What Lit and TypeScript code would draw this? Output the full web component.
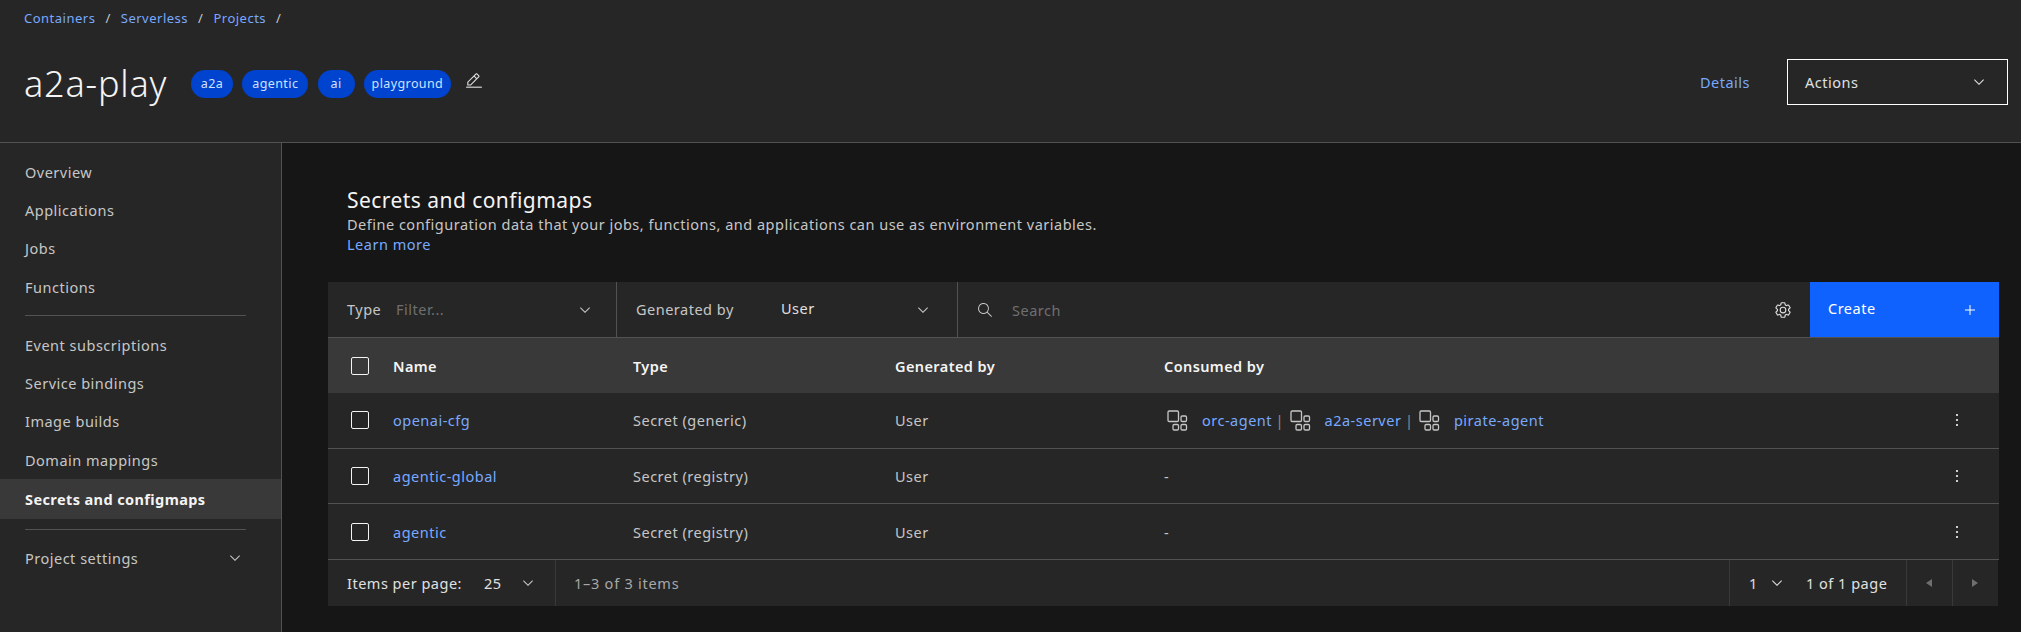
import { LitElement, html, css } from "lit";
import { customElement } from "lit/decorators.js";

const chevron = html`<svg class="chev" width="16" height="16" viewBox="0 0 16 16" fill="currentColor"><path d="M8 11L3 6l.7-.7L8 9.6l4.3-4.3.7.7z"/></svg>`;
const gear = html`<svg width="18" height="18" viewBox="0 0 32 32" fill="currentColor"><path d="M27,16.76c0-.25,0-.5,0-.76s0-.51,0-.77l1.92-1.68A2,2,0,0,0,29.3,11L26.94,7a2,2,0,0,0-1.73-1,2,2,0,0,0-.64.1l-2.43.82a11.35,11.35,0,0,0-1.31-.75l-.51-2.52a2,2,0,0,0-2-1.61H13.64a2,2,0,0,0-2,1.61l-.51,2.52a11.48,11.48,0,0,0-1.32.75L7.43,6.06A2,2,0,0,0,6.79,6,2,2,0,0,0,5.06,7L2.7,11a2,2,0,0,0,.41,2.51L5,15.24c0,.25,0,.5,0,.76s0,.51,0,.77L3.11,18.45A2,2,0,0,0,2.7,21L5.06,25a2,2,0,0,0,1.73,1,2,2,0,0,0,.64-.1l2.43-.82a11.35,11.35,0,0,0,1.31.75l.51,2.52a2,2,0,0,0,2,1.61h4.72a2,2,0,0,0,2-1.61l.51-2.52a11.48,11.48,0,0,0,1.32-.75l2.42.82a2,2,0,0,0,.64.1,2,2,0,0,0,1.73-1L29.3,21a2,2,0,0,0-.41-2.51ZM25.21,24l-3.43-1.16a8.86,8.86,0,0,1-2.71,1.57L18.36,28H13.64l-.71-3.55a9.36,9.36,0,0,1-2.7-1.57L6.79,24,4.43,20l2.72-2.4a8.9,8.9,0,0,1,0-3.13L4.43,12,6.79,8l3.43,1.16a8.86,8.86,0,0,1,2.71-1.57L13.64,4h4.72l.71,3.55a9.36,9.36,0,0,1,2.7,1.57L25.21,8,27.57,12l-2.72,2.4a8.9,8.9,0,0,1,0,3.13L27.57,20Z"/><path d="M16,22a6,6,0,1,1,6-6A5.94,5.94,0,0,1,16,22Zm0-10a3.91,3.91,0,0,0-4,4,3.91,3.91,0,0,0,4,4,3.91,3.91,0,0,0,4-4A3.91,3.91,0,0,0,16,12Z"/></svg>`;
const search = html`<svg width="16" height="16" viewBox="0 0 16 16" fill="currentColor"><path d="M15,14.3L10.7,10c1.9-2.3,1.6-5.8-0.7-7.7S4.2,0.7,2.3,3S0.7,8.8,3,10.7c2,1.7,5,1.7,7,0l4.3,4.3L15,14.3z M2,6.5C2,4,4,2,6.5,2S11,4,11,6.5S9,11,6.5,11S2,9,2,6.5z"/></svg>`;
const pencil = html`<svg width="18" height="18" viewBox="0 0 32 32" fill="currentColor"><path d="M2 26H30V28H2z"/><path d="M25.4,9c0.8-0.8,0.8-2,0-2.8l-3.6-3.6c-0.8-0.8-2-0.8-2.8,0l-15,15V24h6.4L25.4,9z M20.4,4L24,7.6l-3,3L17.4,7L20.4,4z M6,22v-3.6l10-10l3.6,3.6l-10,10H6z"/></svg>`;
const plus = html`<svg width="16" height="16" viewBox="0 0 16 16" fill="currentColor"><path d="M8.5 3h-1v4.500H3v1h4.500V13h1V8.500H13v-1H8.500z"/></svg>`;
const dots = html`<svg width="16" height="16" viewBox="0 0 16 16" fill="currentColor"><circle cx="8" cy="3" r="1.100"/><circle cx="8" cy="8" r="1.100"/><circle cx="8" cy="13" r="1.100"/></svg>`;
const appIcon = html`<svg class="app" width="21" height="21" viewBox="0 0 21 21" fill="none" stroke="currentColor" stroke-width="1.300"><rect x="1" y="1" width="10.500" height="10.500" rx="1.200"/><rect x="14" y="6" width="5.500" height="5.500" rx="1.200"/><rect x="6" y="14.500" width="5.500" height="5.500" rx="1.200"/><rect x="14" y="14.500" width="5.500" height="5.500" rx="1.200"/></svg>`;
const caret = (d: string) => html`<svg width="16" height="16" viewBox="0 0 16 16" fill="currentColor"><path d="${d}"/></svg>`;

const navTop = ["Overview", "Applications", "Jobs", "Functions"];
const navMid = ["Event subscriptions", "Service bindings", "Image builds", "Domain mappings"];
const rows = [
  { name: "openai-cfg", type: "Secret (generic)", consumed: ["orc-agent", "a2a-server", "pirate-agent"] },
  { name: "agentic-global", type: "Secret (registry)", consumed: [] as string[] },
  { name: "agentic", type: "Secret (registry)", consumed: [] as string[] },
];

@customElement("app-root")
export class AppRoot extends LitElement {
  static styles = css`
    :host {
      display: block;
      width: 2021px;
      height: 632px;
      overflow: hidden;
      background: #161616;
      color: #c6c6c6;
      font-family: "Noto Sans", "Liberation Sans", sans-serif;
      font-size: 14.5px;
      letter-spacing: 0.5px;
    }
    a { color: #78a9ff; text-decoration: none; }
    svg { display: block; flex: none; }

    .top { height: 142px; background: #262626; border-bottom: 1px solid #525252; display: flex; }
    .top-left { padding: 9px 0 0 24px; flex: 1; }
    .crumbs { display: flex; font-size: 13px; line-height: 18px; gap: 10px; color: #c6c6c6; }
    .title-row { display: flex; align-items: center; margin-top: 34px; height: 46px; }
    h1 { margin: 0; font-size: 36px; font-weight: 300; line-height: 46px; color: #f4f4f4; width: 167px; letter-spacing: 0.8px; }
    .tags { display: flex; gap: 9.300px; }
    .tag { height: 28px; border-radius: 14px; background: #0043ce; color: #d0e2ff; font-size: 12.5px; line-height: 28px; text-align: center; letter-spacing: 0.4px; }
    .pencil { margin: -6px 0 0 14px; color: #e0e0e0; }
    .top-right { display: flex; align-items: flex-start; padding-top: 59px; padding-right: 13px; }
    .details { line-height: 46px; margin-right: 37px; }
    .actions { width: 221px; height: 46px; box-sizing: border-box; border: 1px solid #fff; display: flex; align-items: center; justify-content: space-between; padding: 0 20px 0 17px; color: #e0e0e0; }

    .body { display: flex; height: 489px; }
    .side { width: 281px; background: #262626; border-right: 1px solid #525252; padding-top: 10px; flex: none; }
    .item { height: 38.300px; box-sizing: border-box; padding-bottom: 1px; display: flex; align-items: center; padding-left: 25px; }
    .item.active { height: 40px; background: #393939; color: #f4f4f4; font-weight: 700; letter-spacing: 0.4px; }
    .item.settings { justify-content: space-between; padding-right: 38px; }
    .rule { height: 1px; background: #525252; margin: 9px 35px 10px 25px; }
    .rule.second { margin: 10px 35px 9px 25px; }

    .main { flex: 1; padding: 0 22px 0 46px; min-width: 0; }
    .intro { padding: 44px 0 0 19px; height: 95px; }
    h2 { margin: 0; font-size: 21px; font-weight: 400; line-height: 26px; color: #f4f4f4; letter-spacing: 0.45px; }
    .desc { line-height: 20px; margin-top: 1px; }
    .learn { display: block; line-height: 20px; }

    .toolbar { height: 55px; background: #262626; display: flex; align-items: stretch; border-bottom: 1px solid #525252; }
    .tb { display: flex; align-items: center; flex: none; box-sizing: border-box; }
    .tb1 { width: 289px; padding: 0 23px 0 19px; justify-content: space-between; border-right: 1px solid #525252; }
    .tb2 { width: 341px; padding: 0 26px 0 19px; justify-content: space-between; border-right: 1px solid #525252; }
    .lab { display: flex; padding-bottom: 1px; }
    .lab span:first-child { width: 49px; }
    .ph { color: #6f6f6f; }
    .gb { width: 145px; padding-bottom: 1px; }
    .user { color: #e0e0e0; flex: 1; padding-bottom: 3px; }
    .tb3 { flex: 1; padding: 0 18px 0 19px; }
    .tb3 .ph { flex: 1; margin-left: 19px; }
    .tb3 svg:last-child { color: #e0e0e0; }
    .create { width: 189px; background: #0f62fe; color: #fff; padding: 0 21px 0 18px; justify-content: space-between; }
    .create span { padding-bottom: 3px; }

    .row { display: grid; grid-template-columns: 65px 240px 262px 269px 1fr 84px; align-items: center; height: 55.670px; background: #262626; border-bottom: 1px solid #525252; box-sizing: border-box; }
    .row.head { height: 55px; background: #393939; border-bottom: none; color: #f4f4f4; font-weight: 600; letter-spacing: 0.4px; }
    .box { width: 18px; height: 18px; box-sizing: border-box; border: 1px solid #f4f4f4; border-radius: 2px; margin-left: 23px; }
    .consumed { display: flex; align-items: center; }
    .consumed .app:first-child { margin-left: 3px; }
    .app { color: #c6c6c6; margin-right: 14px; }
    .pipe { margin: 0 5.500px 0 3.500px; color: #8d8d8d; }
    .more { display: flex; justify-content: center; color: #f4f4f4; margin-left: -1px; }

    .pager { height: 46px; background: #262626; display: flex; align-items: stretch; margin-right: 1px; }
    .pg { display: flex; align-items: center; flex: none; box-sizing: border-box; }
    .pg1 { width: 228px; padding: 0 19px; border-right: 1px solid #393939; }
    .pg1 .lbl { width: 137px; color: #e0e0e0; }
    .pg1 .val { width: 36px; color: #e0e0e0; }
    .pg2 { flex: 1; padding-left: 18px; color: #a8a8a8; border-right: 1px solid #393939; letter-spacing: 0.75px; }
    .pg3 { width: 177px; padding-left: 19px; color: #e0e0e0; border-right: 1px solid #393939; }
    .pg3 .val { width: 12px; }
    .pg3 svg { margin-left: 8px; margin-right: 21px; }
    .arrow { width: 45.500px; justify-content: center; color: #6f6f6f; }
    .arrow.first { border-right: 1px solid #393939; }
  `;

  render() {
    const tags = [["a2a", 42], ["agentic", 66], ["ai", 37], ["playground", 87]] as [string, number][];
    return html`
      <header class="top">
        <div class="top-left">
          <nav class="crumbs">
            <a href="#">Containers</a><span>/</span><a href="#">Serverless</a><span>/</span><a href="#">Projects</a><span>/</span>
          </nav>
          <div class="title-row">
            <h1>a2a-play</h1>
            <div class="tags">
              ${tags.map(([t, w]) => html`<span class="tag" style="width:${w}px">${t}</span>`)}
            </div>
            <div class="pencil">${pencil}</div>
          </div>
        </div>
        <div class="top-right">
          <a class="details" href="#">Details</a>
          <div class="actions"><span>Actions</span>${chevron}</div>
        </div>
      </header>
      <div class="body">
        <aside class="side">
          ${navTop.map((n) => html`<div class="item">${n}</div>`)}
          <div class="rule"></div>
          ${navMid.map((n) => html`<div class="item">${n}</div>`)}
          <div class="item active">Secrets and configmaps</div>
          <div class="rule second"></div>
          <div class="item settings"><span>Project settings</span>${chevron}</div>
        </aside>
        <main class="main">
          <div class="intro">
            <h2>Secrets and configmaps</h2>
            <div class="desc">Define configuration data that your jobs, functions, and applications can use as environment variables.</div>
            <a class="learn" href="#">Learn more</a>
          </div>
          <div class="toolbar">
            <div class="tb tb1"><div class="lab"><span>Type</span><span class="ph">Filter...</span></div>${chevron}</div>
            <div class="tb tb2"><span class="gb">Generated by</span><span class="user">User</span>${chevron}</div>
            <div class="tb tb3">${search}<span class="ph">Search</span>${gear}</div>
            <div class="tb create"><span>Create</span>${plus}</div>
          </div>
          <div class="row head">
            <div class="box"></div><div>Name</div><div>Type</div><div>Generated by</div><div>Consumed by</div><div></div>
          </div>
          ${rows.map((r) => html`
            <div class="row">
              <div class="box"></div>
              <a href="#">${r.name}</a>
              <div>${r.type}</div>
              <div>User</div>
              <div class="consumed">
                ${r.consumed.length
                  ? r.consumed.map((c, i) => html`${appIcon}<a href="#">${c}</a>${i < r.consumed.length - 1 ? html`<span class="pipe">|</span>` : ""}`)
                  : "-"}
              </div>
              <div class="more">${dots}</div>
            </div>`)}
          <div class="pager">
            <div class="pg pg1"><span class="lbl">Items per page:</span><span class="val">25</span>${chevron}</div>
            <div class="pg pg2">1–3 of 3 items</div>
            <div class="pg pg3"><span class="val">1</span>${chevron}<span>1 of 1 page</span></div>
            <div class="pg arrow first">${caret("M11 4v8L5 8z")}</div>
            <div class="pg arrow">${caret("M5 4v8l6-4z")}</div>
          </div>
        </main>
      </div>
    `;
  }
}
